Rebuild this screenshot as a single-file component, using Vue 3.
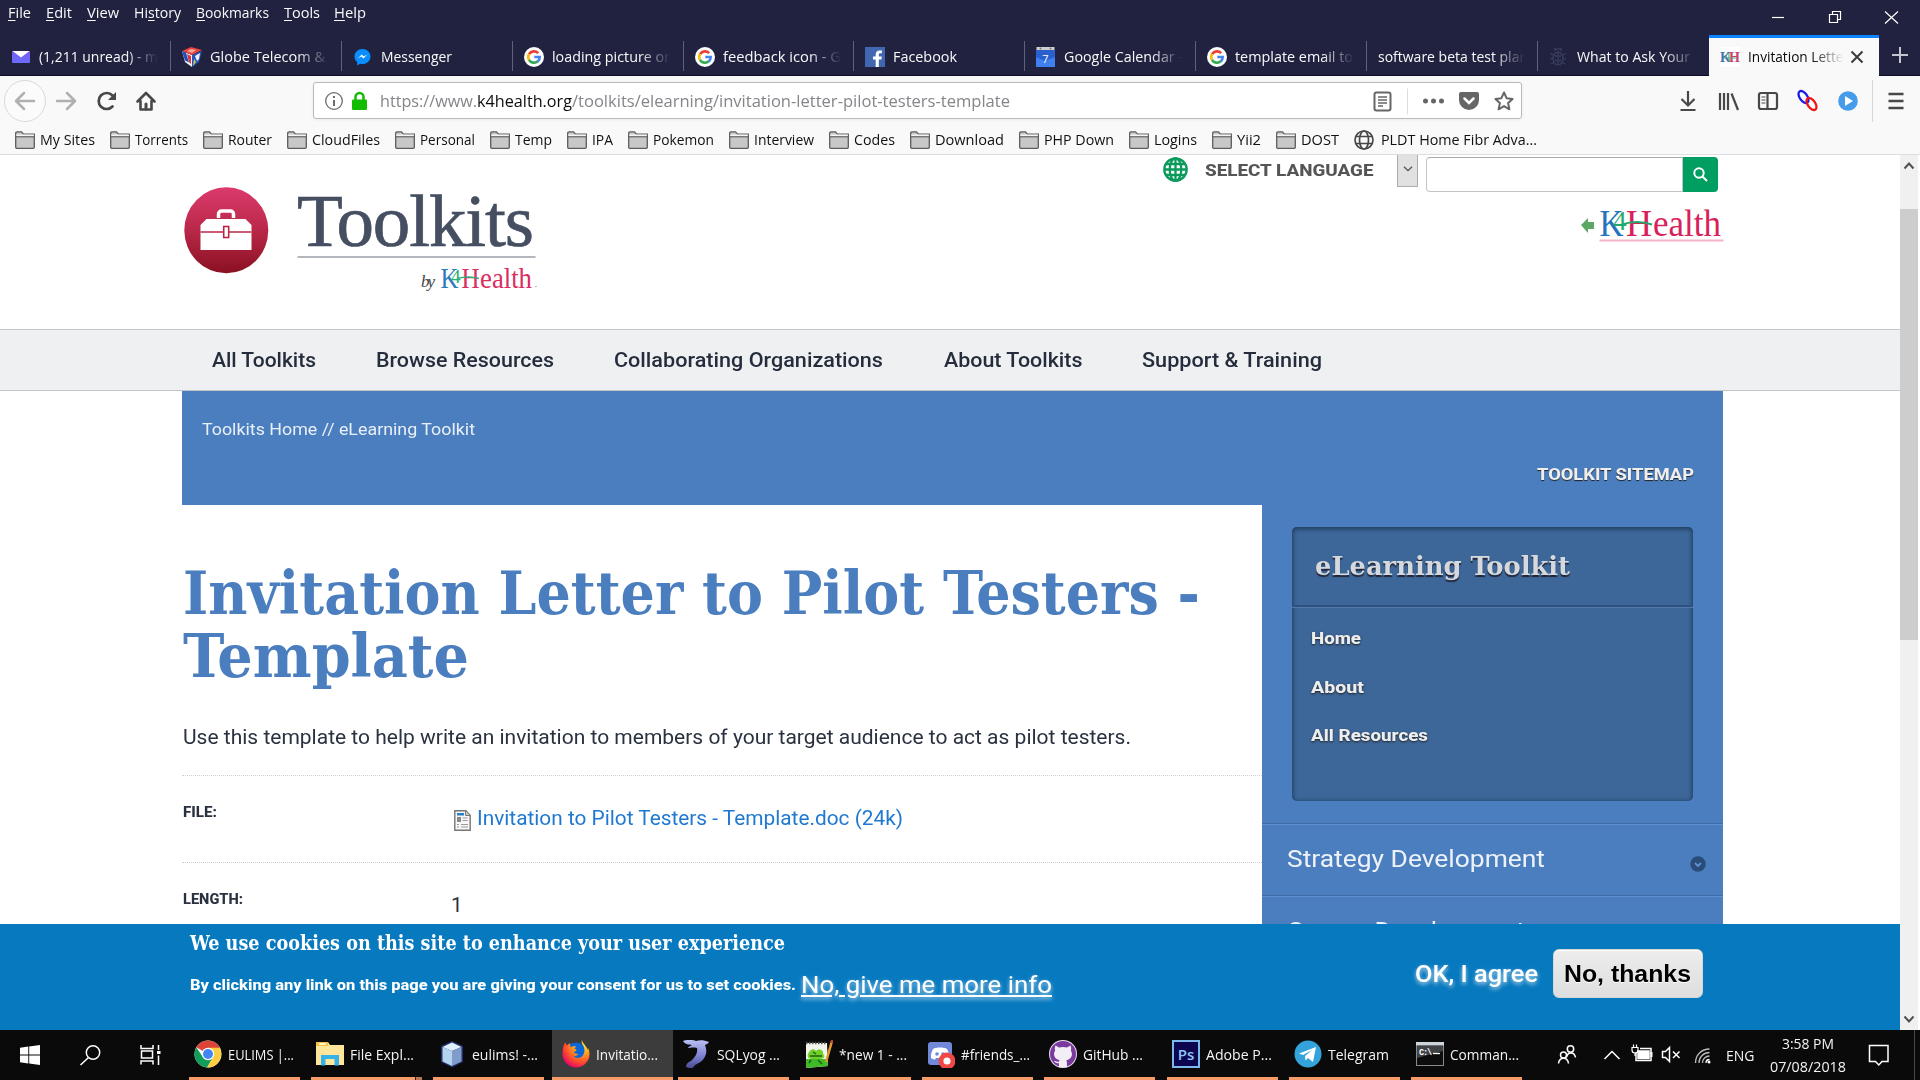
<script setup>
// Scales a label horizontally so that it takes exactly the given width.
const fit = (el, width) => {
  const glyphs = document.createElement('span')
  glyphs.className = 'glyphs'
  glyphs.append(...el.childNodes)
  el.append(glyphs)
  const natural = glyphs.getBoundingClientRect().width
  glyphs.style.transform = `scaleX(${width / natural})`
  el.style.width = `${width}px`
}
const vFit = { mounted: (el, { value }) => fit(el, value) }

const menus = [
  ['F', 'ile', '', 23, 15], ['E', 'dit', '', 26, 15], ['V', 'iew', '', 32, 15],
  ['s', 'tory', 'Hi', 47, 15], ['B', 'ookmarks', '', 73, 15], ['T', 'ools', '', 36, 14], ['H', 'elp', '', 32, 0],
]

const google = `<circle cx="10" cy="10" r="10" fill="#fff"/><g fill="none" stroke-width="2.6"><path d="M14.2 6.2A5.8 5.8 0 0 0 5 7.2" stroke="#ea4335"/><path d="M5 7.2a5.8 5.8 0 0 0 0 5.6" stroke="#fbbc05"/><path d="M5 12.8a5.8 5.8 0 0 0 8.8 1.5" stroke="#34a853"/><path d="M10.3 10h5.4c0 2-.7 3.4-1.9 4.4" stroke="#4285f4"/></g>`

const tabs = [
  { text: '(1,211 unread) - m', w: 119, icon: `<defs><linearGradient id="ym" x2="0" y2="1"><stop offset="0" stop-color="#7b5cf5"/><stop offset="1" stop-color="#6a6cf8"/></linearGradient></defs><rect x="1" y="4" width="18" height="12" rx="1" fill="url(#ym)"/><path d="M1.500 4h17L10 10.500z" fill="#fff"/>` },
  { text: 'Globe Telecom &', w: 115, icon: `<path d="M0 4 10 8v12L3 15z" fill="#f0f2fa"/><path d="M20 4 10 8v12l7-5z" fill="#2456bd"/><path d="M0 4 9 0l11 3-10 5z" fill="#e8423c"/><path d="M0 4l4 1.500 3 10-4-2z" fill="#1e50b8"/><path d="M5 7l4 2v8l-2-2z" fill="#d9343c"/><path d="M18 6l-5 3 2 5 2-2z" fill="#f3f4fa"/><path d="M12 12l2 3-3 4z" fill="#e5c54a"/><path d="M9 2l5 1-4 3-5-2z" fill="#f3a49b"/>` },
  { text: 'Messenger', w: 71, icon: `<path d="M9.500 2C5 2 1.500 5.300 1.500 9.500c0 2.300 1 4.200 2.700 5.600V18.500l3-1.700c.7.200 1.500.3 2.300.3 4.500 0 8-3.300 8-7.600S14 2 9.500 2z" fill="#0a8dff"/><path d="M4.800 11.600 8.700 7.500l2 2.100 3.600-2.100-3.900 4.100-2-2.100z" fill="#fff"/>` },
  { text: 'loading picture or', w: 118, icon: google },
  { text: 'feedback icon - G', w: 118, icon: google },
  { text: 'Facebook', w: 64, icon: `<rect width="20" height="20" fill="#4267b2"/><path d="M13.800 20v-7.500h2.600l.4-3h-3V7.700c0-.9.300-1.500 1.500-1.500h1.600V3.500c-.3 0-1.200-.1-2.300-.1-2.300 0-3.900 1.400-3.900 3.900v2.200H8v3h2.700V20z" fill="#fff"/>` },
  { text: 'Google Calendar -', w: 119, icon: `<rect y="3" width="19" height="17" fill="#3f7ff0"/><path d="M0 3h19v7L9 14 0 10z" fill="#2a5fd0"/><rect x=".5" width="18" height="3" fill="#cfcfcf"/><circle cx="4.500" cy="1.500" r="1" fill="#777"/><circle cx="14.500" cy="1.500" r="1" fill="#777"/><text x="9.500" y="15.500" text-anchor="middle" font-family="Open Sans" font-size="11" fill="#fff">7</text>` },
  { text: 'template email to', w: 118, icon: google },
  { text: 'software beta test plan', w: 150 },
  { text: 'What to Ask Your', w: 113, icon: `<g fill="none" stroke="#3c4263" stroke-width="1.200"><ellipse cx="9" cy="11.500" rx="5" ry="6.500"/><path d="M9 5v13M6 4c0-3 6-3 6 0M4 8 1.500 6.500M4 12H1M4.500 15.500 2 17M14 8l2.500-1.500M14 12h3M13.500 15.500 16 17M5 1l2 2M13 1l-2 2"/></g><g fill="#3c4263"><circle cx="7" cy="9" r="1"/><circle cx="11" cy="9" r="1"/><circle cx="7" cy="13.500" r="1"/><circle cx="11" cy="13.500" r="1"/></g>` },
]

const bookmarks = [
  ['My Sites', 55], ['Torrents', 53], ['Router', 44], ['CloudFiles', 68], ['Personal', 55], ['Temp', 37],
  ['IPA', 21], ['Pokemon', 61], ['Interview', 60], ['Codes', 41], ['Download', 69], ['PHP Down', 70],
  ['Logins', 43], ['Yii2', 24], ['DOST', 38],
]

const nav = [
  ['All Toolkits', 104], ['Browse Resources', 178], ['Collaborating Organizations', 269],
  ['About Toolkits', 138.500], ['Support & Training', 180],
]

const sideLinks = [['Home', 50], ['About', 53], ['All Resources', 117]]
const sections = [['Strategy Development', 258], ['Course Development', 238]]

const tasks = [
  { text: 'EULIMS |...', w: 66, icon: `<circle cx="14" cy="14" r="13.500" fill="#fff"/><path d="M14 14 2.300 7.200A13.500 13.500 0 0 1 25.700 7.200L26 8H14z" fill="#db4437"/><path d="M2.300 7.200A13.500 13.500 0 0 0 13 27.500L19.200 17 14 14 8.800 17z" fill="#0f9d58"/><path d="M25.700 7.800H14l5.200 9.200L13.300 27.500A13.500 13.500 0 0 0 25.700 7.800z" fill="#ffcd40"/><circle cx="14" cy="14" r="6.200" fill="#fff"/><circle cx="14" cy="14" r="5" fill="#4285f4"/>` },
  { text: 'File Expl...', w: 64, stacked: true, icon: `<path d="M0 2h12l2 3h14v20H0z" fill="#ffe69a"/><path d="M0 2h12v4H0z" fill="#f6c343"/><rect x="3" y="3" width="7" height="2" fill="#fff3c8"/><path d="M5 25.500V15h18v10.500h-4.500V19h-9v6.500z" fill="#35b3e8"/>` },
  { text: 'eulims! -...', w: 66, icon: `<path d="M14 1 25 6v16l-11 5.500L3 22V6z" fill="#23306a"/><path d="M14 2.500 23.500 7 14 11 4.500 7z" fill="#dff0fb"/><path d="M4.500 7 14 11v15L4.500 21.500z" fill="#b4d3ee"/><path d="M23.500 7 14 11v15l9.500-4.500z" fill="#7f9ccb"/>` },
  { text: 'Invitatio...', w: 62, active: true, icon: `<defs><radialGradient id="ff" cx=".75" cy=".15" r=".95"><stop offset="0" stop-color="#fff03c"/><stop offset=".35" stop-color="#ffa51e"/><stop offset=".7" stop-color="#ff4b2d"/><stop offset="1" stop-color="#e2006e"/></radialGradient></defs><circle cx="14" cy="13" r="10.500" fill="#0b66d8"/><path d="M20 0c-1 3 .5 4 1.500 6 1.500 3 1.500 7-1 10-2.500 2.700-7 2.500-9 0 2 .5 4-.5 5-2-1 .3-3-.8-4.500-1 .3-2 2.500-1.500 2.500-3-.6-1-2-1-2-1.200.2-1 1.500-1.800 1.500-2.300C12 6 10 6.500 9 7.200 8 6.500 8 4 8.300 3 6.500 3.800 5.500 5 5 5.500 4 4.500 3.500 3 3.500 2 1 5 .5 10 .5 14A13.500 13.500 0 0 0 27.500 14c0-3-.8-5-1.500-6l-.5 2C25 6 20.500 4 20 0z" fill="url(#ff)"/>` },
  { text: 'SQLyog ...', w: 63, icon: `<defs><linearGradient id="dl" x2="0" y2="1"><stop offset="0" stop-color="#b9c0f3"/><stop offset=".5" stop-color="#8488d6"/><stop offset="1" stop-color="#43488f"/></linearGradient></defs><path d="M0 1C4-.5 9-.5 13 1c4-1.500 8-1 13 1-1 2-3 2-4 3 3 7 1 15-8 19l-2 1-3 4-6-2c0-3 2-5 5-6 5-4 7-9 6-13-4-1-7 0-9 0 1-2 3-2 4-3C6 4.500 2 4.500 0 1z" fill="url(#dl)"/>` },
  { text: '*new 1 - ...', w: 68, icon: `<path d="M1 3h21l1 23-22 2z" fill="#f4f4ee"/><path d="M1 19h21.500l.5 7-22 2z" fill="#3fb927"/><path d="M1 3h21" stroke="#555" stroke-width="2.500" stroke-dasharray="1.500 1.500"/><path d="M3 14c2-5 6-6 8-3 3-3 8-1 7 3 3 2 1 5-3 5H7c-4 0-5-3-4-5z" fill="#71d028"/><path d="M5 16h12M8 12l3 2M13 20l4 4M6 20l-2 3" stroke="#1d5f14" stroke-width="1.500"/><path d="M27 1 21 22" stroke="#e39a2c" stroke-width="2.500"/><path d="M27.500 0l-.8 3" stroke="#c4453a" stroke-width="2.500"/>` },
  { text: '#friends_...', w: 69, icon: `<rect x="1" y="2" width="24" height="23" rx="3" fill="#7289da"/><path d="M6 9c3-2 11-2 14 0 2 3 2.500 7 2 9-2 1.500-4 1.500-4 1.500L17 18H9l-1 1.500S5.500 19 4 18c-.5-3 .5-6 2-9z" fill="#fff"/><circle cx="10" cy="14" r="1.800" fill="#7289da"/><circle cx="16" cy="14" r="1.800" fill="#7289da"/><circle cx="20" cy="21" r="8.500" fill="#f04747"/><circle cx="20" cy="21" r="3.600" fill="#fff"/>` },
  { text: 'GitHub ...', w: 60, icon: `<circle cx="14" cy="14" r="14" fill="#e8dcf0"/><circle cx="14" cy="14" r="13" fill="#7b3a9e"/><path d="M6.500 5.500 10 7.500c2.500-.7 5.500-.7 8 0l3.500-2c1 2 .7 4 .3 5 1 1.500 1.400 3 1 5-.7 3-3 4.200-5.600 4.700.8 1 .8 2 .8 7h-8v-4c-3 .5-4-1-5-2.500 2 0 2.500 1.500 5 1 0-.7.200-1.200.6-1.600-3-.5-4.800-2-5.400-4.600-.4-2 0-3.500 1-5-.4-1-.7-3 .3-5z" fill="#f2eef5"/>` },
  { text: 'Adobe P...', w: 66, icon: `<rect x="1" y="1" width="26" height="26" fill="#0c0550" stroke="#7ab8ee" stroke-width="2"/><text x="14" y="19.500" text-anchor="middle" font-family="Open Sans" font-weight="600" font-size="15" fill="#8fc6f5">Ps</text>` },
  { text: 'Telegram', w: 61, icon: `<circle cx="14" cy="14" r="13.500" fill="#34a3db"/><path d="M5 13.500 22 7l-3 15-5-4-2.500 2.500-.5-4.500 7-6-9 5z" fill="#fff"/>` },
  { text: 'Comman...', w: 69, icon: `<rect x=".5" y="2.500" width="27" height="23" fill="#0d0d0d" stroke="#8a8a8a"/><rect y="2" width="28" height="3.500" fill="#cfd5da"/><path d="M1 6h26v5L1 18z" fill="#3f4347"/><text x="3" y="14.500" font-family="Liberation Mono" font-weight="700" font-size="8.500" fill="#fff" textLength="13">C:\\</text><path d="M17 13.500h7" stroke="#fff" stroke-width="1.300"/>` },
]
</script>

<template>
  <div class="screen">
    <header class="titlebar">
      <nav class="menu">
        <span v-for="m in menus" :key="m[1]" v-fit="m[3]" :style="{ marginRight: m[4] + 'px' }">{{ m[2] }}<u>{{ m[0] }}</u>{{ m[1] }}</span>
      </nav>
      <svg class="winctl" width="140" height="34" viewBox="0 0 140 34" fill="none" stroke="#fff" stroke-width="1.200">
        <path d="M2 17.500h12" /><path d="M59.500 14.500h8v8h-8z M62.500 14.500v-3h8v8h-3" /><path d="M115 11.500l13 12M128 11.500l-13 12" />
      </svg>
    </header>

    <div class="tabs">
      <div v-for="(t, i) in tabs" :key="i" class="tab">
        <svg v-if="t.icon" width="20" height="20" viewBox="0 0 20 20" v-html="t.icon" />
        <div class="tabtext"><span v-fit="t.w">{{ t.text }}</span></div>
      </div>
      <div class="tab active">
        <svg width="20" height="20" viewBox="0 0 20 20">
          <rect width="20" height="20" fill="#fff" />
          <g font-family="Liberation Serif" font-weight="700" font-size="14"><text x="0" y="15" fill="#3f6fb5">K</text><text x="9" y="15" fill="#c8426b">H</text></g>
          <path d="M4 11h13M8 6l-3 5M9 6v9" stroke="#5fa883" stroke-width="1.200" fill="none" />
        </svg>
        <div class="tabtext"><span v-fit="101">Invitation Letter</span></div>
        <svg class="close" width="14" height="14" viewBox="0 0 14 14"><path d="M1.500 1.500l11 11M12.500 1.500l-11 11" stroke="#3b3b3b" stroke-width="2" /></svg>
      </div>
      <svg class="plus" width="18" height="18" viewBox="0 0 18 18"><path d="M9 1v16M1 9h16" stroke="#c4c5cf" stroke-width="2" /></svg>
    </div>

    <div class="toolbar">
      <svg class="left" width="313" height="46" viewBox="0 0 313 46" fill="none" stroke-linecap="round" stroke-linejoin="round">
        <circle cx="25" cy="25" r="20.500" stroke="#d9d9d9" fill="#fbfbfb" />
        <path d="M34 25H16.500M24 17l-8 8 8 8" stroke="#b0b0b0" stroke-width="2.500" />
        <path d="M57 25h17.500M67 17l8 8-8 8" stroke="#b0b0b0" stroke-width="2.500" />
        <path d="M112.500 30.500a8 8 0 1 1 0-11" stroke="#484848" stroke-width="2.700" /><path d="M116 16v8h-8z" fill="#484848" />
        <path d="M137.500 25.500 146 17l8.500 8.500M140.500 25v8.500h11V25" stroke="#484848" stroke-width="2.600" /><path d="M146 33v-5" stroke="#484848" stroke-width="3" />
      </svg>
      <div class="url">
        <svg width="55" height="35" viewBox="0 0 55 35">
          <circle cx="20" cy="18" r="8.300" fill="none" stroke="#6b6b6b" stroke-width="1.300" /><path d="M20 17v6M20 13v2" stroke="#6b6b6b" stroke-width="2" />
          <path d="M41.500 18v-4a4 4 0 0 1 8 0v4" fill="none" stroke="#12bc00" stroke-width="2.500" /><rect x="38" y="16.500" width="15" height="10.500" rx="1.300" fill="#12bc00" />
        </svg>
        <span v-fit="97" class="utext">https://www.</span><span v-fit="95" class="utext host">k4health.org</span><span v-fit="438" class="utext">/toolkits/elearning/invitation-letter-pilot-testers-template</span>
        <svg class="uicons" width="150" height="35" viewBox="0 0 150 35" fill="none">
          <rect x="3.500" y="9.500" width="16" height="18" rx="2" stroke="#666" stroke-width="2" /><path d="M7 14h9M7 17h9M7 20h9M7 23h5" stroke="#666" stroke-width="1.400" />
          <path d="M36.500 5.500v26" stroke="#ddd" />
          <g fill="#666"><circle cx="54.500" cy="18" r="2.500" /><circle cx="62.500" cy="18" r="2.500" /><circle cx="70.500" cy="18" r="2.500" />
            <path d="M90 9h16a2 2 0 0 1 2 2v6a10 10 0 0 1-20 0v-6a2 2 0 0 1 2-2z" /></g>
          <path d="M93.500 15.500l4.500 4.500 4.500-4.500" stroke="#fff" stroke-width="2.500" stroke-linecap="round" />
          <path d="M133 9.500l2.600 5.700 6 .7-4.500 4.200 1.300 6.200-5.400-3.200-5.400 3.200 1.300-6.200-4.500-4.200 6-.7z" stroke="#666" stroke-width="2" stroke-linejoin="round" />
        </svg>
      </div>
      <svg class="right" width="260" height="46" viewBox="0 0 260 46" fill="none" stroke="#484848" stroke-width="2.200">
        <path d="M28 15v14M21.500 23l6.500 6.500L34.500 23M20.500 34h15" />
        <path d="M60 17v17M64 17v17M68 17v17M71.500 17.500l6.500 16.500" />
        <rect x="99" y="17" width="18" height="16" rx="2" /><path d="M107.500 17v16" /><path d="M101.500 21h4M101.500 24h4M101.500 27h4" stroke-width="1.200" />
        <g stroke-width="2.300"><ellipse cx="143.500" cy="21" rx="3.800" ry="6.800" transform="rotate(-35 143.500 21)" stroke="#1a1ae8" /><ellipse cx="151.500" cy="28" rx="3.800" ry="6.800" transform="rotate(-35 151.500 28)" stroke="#ef1515" /></g>
        <circle cx="188" cy="25" r="9.800" fill="#469cea" stroke="none" /><path d="M185 20l8 5-8 5z" fill="#fff" stroke="none" />
        <path d="M212.500 4v42" stroke="#d5d5d5" stroke-width="1" />
        <path d="M228.500 18h15M228.500 25h15M228.500 32h15" stroke-width="2.600" />
      </svg>
    </div>

    <div class="bookmarks">
      <div v-for="b in bookmarks" :key="b[0]" class="bm">
        <svg width="20" height="18" viewBox="0 0 20 18"><path d="M.7 16.300V2.200c0-.8.5-1.300 1.300-1.300h4.500l2 2.300h10.800v13.100c0 .6-.4 1-1 1H1.700c-.6 0-1-.4-1-1z" fill="#c8c8c8" stroke="#5c5c5c" stroke-width="1.300" /><path d="M1.300 3.500h17.500v1.700H1.300z" fill="#f4f4f4" /><path d="M.7 5.800h18.600" stroke="#5c5c5c" stroke-width="1.100" /></svg>
        <span v-fit="b[1]">{{ b[0] }}</span>
      </div>
      <div class="bm">
        <svg width="20" height="20" viewBox="0 0 20 20" fill="none" stroke="#484848" stroke-width="1.700"><circle cx="10" cy="10" r="9" /><ellipse cx="10" cy="10" rx="4.500" ry="9" /><path d="M2 6.500h16M2 13.500h16" /></svg>
        <span v-fit="156" class="pldt">PLDT Home Fibr Adva...</span>
      </div>
    </div>

    <div class="view">
      <main class="page">
        <div class="head">
          <svg class="brand" width="370" height="174" viewBox="0 0 370 174">
            <defs>
              <linearGradient id="disc" x2="0" y2="1"><stop offset="0" stop-color="#dc3a6c" /><stop offset=".5" stop-color="#b92848" /><stop offset="1" stop-color="#8a1022" /></linearGradient>
            </defs>
            <ellipse cx="46.300" cy="75.300" rx="42" ry="43" fill="url(#disc)" />
            <path d="M38.500 63v-4a3 3 0 0 1 3-3h9a3 3 0 0 1 3 3v4" fill="none" stroke="#fff" stroke-width="3.500" />
            <path d="M20.500 70l6-6h39l6 6v25h-51z" fill="#fff" />
            <path d="M20.500 77h51" stroke="#b92848" stroke-width="1.500" /><rect x="43.700" y="71.500" width="5" height="11" fill="#fff" stroke="#b92848" stroke-width="1.600" />
            <text x="117" y="91" font-family="Liberation Serif, serif" font-size="75" fill="#454f61" stroke="#454f61" stroke-width=".7" textLength="237" lengthAdjust="spacing">Toolkits</text>
            <path d="M117.500 102h238" stroke="#b3b6bd" stroke-width="2" />
            <text x="241" y="132" font-family="Liberation Serif, serif" font-style="italic" font-size="17" fill="#444" textLength="14">by</text>
            <g font-family="Liberation Serif, serif">
              <text x="260.500" y="132.500" font-size="29" fill="#2b7cc0" textLength="18" lengthAdjust="spacingAndGlyphs">K</text>
              <text x="281.500" y="132.500" font-size="29" fill="#da2d62" textLength="18" lengthAdjust="spacingAndGlyphs">H</text>
              <text x="300" y="132.500" font-size="29" fill="#da2d62" textLength="52" lengthAdjust="spacingAndGlyphs">ealth</text>
              <text x="271" y="127.500" font-size="19" fill="#2eae74">4</text>
            </g>
            <path d="M277 123.500q12-3 22 0" fill="none" stroke="#2eae74" stroke-width="1.500" />
            <path d="M355 131.500h2" stroke="#bbb" />
          </svg>
          <div class="tools">
            <div class="toolrow">
              <svg class="globe" width="25" height="25" viewBox="0 0 25 25" fill="none" stroke="#0a9b5c" stroke-width="2.300"><circle cx="12.500" cy="12.500" r="11.200" /><ellipse cx="12.500" cy="12.500" rx="5.800" ry="11.200" /><path d="M12.500 1v23M1.500 12.500h22M3 7h19M3 18h19" /></svg>
              <span v-fit="168.5" class="lang">SELECT LANGUAGE</span>
              <div class="drop"><svg width="10" height="6" viewBox="0 0 10 6"><path d="M1 .7l4 4 4-4" fill="none" stroke="#555" stroke-width="1.300" /></svg></div>
              <div class="search" />
              <div class="go"><svg width="15" height="15" viewBox="0 0 15 15" fill="none" stroke="#fff" stroke-width="2"><circle cx="6" cy="6" r="4.700" /><path d="M9.500 9.500l4.500 4.500" /></svg></div>
            </div>
            <svg class="k4" width="146" height="44" viewBox="0 0 146 44">
              <path d="M3 20l7-7v4h6v7h-6v4z" fill="#5aa863" />
              <g font-family="Liberation Serif, serif">
                <text x="21.500" y="31" font-size="38" fill="#2474bc" textLength="24" lengthAdjust="spacingAndGlyphs">K</text>
                <text x="48" y="31" font-size="38" fill="#d8215a" textLength="26" lengthAdjust="spacingAndGlyphs">H</text>
                <text x="75" y="31" font-size="38" fill="#d8215a" textLength="68" lengthAdjust="spacingAndGlyphs">ealth</text>
                <text x="35" y="25" font-size="27" fill="#22a86a">4</text>
              </g>
              <path d="M44 19.500q15-5 30 0" fill="none" stroke="#22a86a" stroke-width="2" />
              <path d="M21.500 35.500h124" stroke="#f5b4c5" stroke-width="2" />
            </svg>
          </div>
        </div>

        <nav class="nav"><span v-for="n in nav" :key="n[0]" v-fit="n[1]">{{ n[0] }}</span></nav>

        <div class="wrap">
          <div class="banner">
            <span v-fit="273" class="crumb">Toolkits Home // eLearning Toolkit</span>
            <span v-fit="157" class="sitemap">TOOLKIT SITEMAP</span>
          </div>
          <div class="cols">
            <article class="main">
              <h1><span v-fit="1017">Invitation Letter to Pilot Testers -</span><span v-fit="286">Template</span></h1>
              <p class="intro"><span v-fit="948">Use this template to help write an invitation to members of your target audience to act as pilot testers.</span></p>
              <div class="field">
                <div class="label"><span v-fit="34">FILE:</span></div>
                <div class="value">
                  <svg width="17" height="21" viewBox="0 0 17 21"><path d="M.8.800h11l4.400 4.400v15H.8z" fill="#f7f7f7" stroke="#777" stroke-width="1.400" /><path d="M11.500 1v4.500H16" fill="#ccc" stroke="#777" /><rect x="3" y="3" width="7" height="2.500" fill="#2b7fc3" /><rect x="3" y="7" width="4" height="5" fill="#888" /><path d="M8.500 8h5M8.500 10.500h5M3 14.500h2M7 14.500h7M3 17h2M7 17h7" stroke="#999" stroke-width="1.100" /></svg>
                  <a v-fit="426">Invitation to Pilot Testers - Template.doc (24k)</a>
                </div>
              </div>
              <div class="field">
                <div class="label"><span v-fit="60">LENGTH:</span></div>
                <div class="value one">1</div>
              </div>
            </article>
            <aside class="side">
              <div class="box">
                <h2><span v-fit="255">eLearning Toolkit</span></h2>
                <div class="links"><span v-for="l in sideLinks" :key="l[0]" v-fit="l[1]">{{ l[0] }}</span></div>
              </div>
              <div v-for="(s, i) in sections" :key="s[0]" class="section">
                <span v-fit="s[1]">{{ s[0] }}</span>
                <svg v-if="i === 0" width="16" height="16" viewBox="0 0 16 16"><circle cx="8" cy="8" r="7.700" fill="#294c79" /><path d="M5 7l3 3 3-3" fill="none" stroke="#5f92cf" stroke-width="1.800" /></svg>
              </div>
            </aside>
          </div>
        </div>

        <div class="cookie">
          <div class="msg">
            <h3><span v-fit="595">We use cookies on this site to enhance your user experience</span></h3>
            <p><b v-fit="606">By clicking any link on this page you are giving your consent for us to set cookies.</b><a v-fit="251">No, give me more info</a></p>
          </div>
          <div class="acts"><span v-fit="123" class="ok">OK, I agree</span><button><span v-fit="127">No, thanks</span></button></div>
        </div>
      </main>
      <div class="scroll">
        <svg width="18" height="20" viewBox="0 0 18 20"><path d="M4.500 13.500 9 8.500l4.500 5" fill="none" stroke="#505050" stroke-width="2" /></svg>
        <div class="thumb" />
        <svg width="18" height="22" viewBox="0 0 18 22"><path d="M4.500 8.500l4.500 5 4.500-5" fill="none" stroke="#505050" stroke-width="2" /></svg>
      </div>
    </div>

    <footer class="taskbar">
      <svg width="189" height="50" viewBox="0 0 189 50" fill="none" stroke="#fff" stroke-width="1.500">
        <path d="M20 17.800l8.300-1.200v8H20zM29.200 16.500 40 15v9.600H29.200zM20 25.500h8.300v8L20 32.300zM29.200 25.500H40V35l-10.800-1.500z" fill="#fff" stroke="none" />
        <circle cx="93" cy="22.500" r="6.700" /><path d="M88.500 27.500 80.500 35" />
        <path d="M141 15v3.500h12V15M141 34.500V31h12v3.500M141.500 21h11v7h-11zM158.500 15v5M158.500 25.500V35" /><path d="M157 21h3.500v3H157z" fill="#fff" stroke="none" />
      </svg>
      <div class="tasks">
        <div v-for="t in tasks" :key="t.text" class="task" :class="{ on: t.active, stacked: t.stacked }">
          <svg width="28" height="28" viewBox="0 0 28 28" v-html="t.icon" />
          <span v-fit="t.w">{{ t.text }}</span>
        </div>
      </div>
      <svg class="tray" width="170" height="50" viewBox="0 0 170 50" fill="none" stroke="#fff" stroke-width="1.500">
        <circle cx="20.500" cy="19" r="3.200" /><path d="M16.500 27.500c1-6 8-6 9 0" /><circle cx="13.500" cy="25" r="3" /><path d="M8.500 33.500c1-7 9-7 10 0" />
        <path d="M54.500 29l7.500-7.500 7.500 7.500" />
        <path d="M90 18.500h11v12H86v-8" /><path d="M88 21h11v7.500H88z" fill="#fff" /><path d="M82 17.500h6v2.500a3 3 0 0 1-6 0zM83.500 14.500v3M86.500 14.500v3M85 23v3" stroke-width="1.200" /><path d="M101.500 22v5" stroke-width="2" />
        <path d="M112.500 21.500h3l4-4v14l-4-4h-3zM123 21.500l6.500 6.500M129.500 21.500 123 28" />
        <g stroke="#bbb" stroke-width="1.300"><path d="M145.500 33c0-8 6-14 14-14M149 33c0-6 4.500-10.500 10.500-10.500M152.500 33c0-4 3-7 7-7" /><path d="M156 33c0-2 1.500-3.500 3.500-3.500" stroke="#fff" /></g><circle cx="159" cy="32" r="1.500" fill="#fff" stroke="none" />
      </svg>
      <span v-fit="28.5" class="eng">ENG</span>
      <div class="clock"><span v-fit="52">3:58 PM</span><span v-fit="76">07/08/2018</span></div>
      <svg class="note" width="22" height="24" viewBox="0 0 22 24" fill="none" stroke="#fff" stroke-width="1.500"><path d="M1.500 1.500h18.500v16h-6l-3.200 3.500-3.300-3.500h-6z" /></svg>
      <div class="peek" />
    </footer>
  </div>
</template>

<style>
body { margin: 0; overflow: hidden; }
</style>

<style scoped>
.screen { width: 1920px; height: 1080px; overflow: hidden; display: flex; flex-direction: column; background: #fff; font-family: "Open Sans", "Noto Sans", sans-serif; font-size: 14.500px; color: #0c0c0d; }
.screen span, .screen a, .screen b { display: inline-block; white-space: nowrap; flex: none; }
.screen :deep(.glyphs) { display: inline-block; white-space: nowrap; transform-origin: 0 50%; }
svg { display: block; flex: none; }
h1, h2, h3, p { margin: 0; }

.titlebar { height: 34px; flex: none; display: flex; justify-content: space-between; background: #20223f; color: #f9f9fa; }
.menu { display: flex; padding-left: 8px; line-height: 26px; }
.menu u { text-decoration: underline; text-underline-offset: 2px; }
.winctl { margin-right: 10px; }

.tabs { height: 42px; flex: none; display: flex; background: #20223f; color: #f9f9fa; box-shadow: inset 0 -1px #0d0b26; }
.tab { width: 170.900px; flex: none; box-sizing: border-box; display: flex; align-items: center; padding: 3px 13px 0 11px; position: relative; }
.tab:not(.active):not(:nth-child(10))::after { content: ""; position: absolute; right: 0; top: 7px; height: 30px; border-right: 1px solid #60627a; }
.tabtext { flex: 1; min-width: 0; overflow: hidden; line-height: 24px; white-space: nowrap; -webkit-mask-image: linear-gradient(to left, transparent 0, #000 32px); mask-image: linear-gradient(to left, transparent 0, #000 32px); }
.tab svg + .tabtext { margin-left: 8px; }
.active { background: #f9f9fa; color: #0c0c0d; box-shadow: inset 0 3px #0a84ff; margin-top: 1px; padding: 2px 15px 0 11px; width: 170px; }
.tab .close { margin-left: 6px; }
.plus { margin: 12px 0 0 12px; }

.toolbar { height: 46px; flex: none; display: flex; background: #f9f9fa; }
.url { box-sizing: border-box; width: 1209px; height: 37px; margin-top: 6px; border: 1px solid #b9b9ba; border-radius: 3px; background: #fff; display: flex; align-items: center; box-shadow: 0 1px 4px rgba(0,0,0,.06); }
.url > svg:first-child { margin-right: 11px; }
.utext { font-size: 16px; line-height: 34px; margin-top: 1px; color: #85858a; }
.host { color: #0c0c0d; }
.uicons { margin-left: 360.500px; margin-right: -4px; }
.right { margin-left: 138px; }

.bookmarks { height: 32px; flex: none; box-sizing: content-box; display: flex; gap: 15px; padding-left: 15px; background: #f9f9fa; border-bottom: 1px solid #dedede; }
.bm { display: flex; align-items: center; gap: 5px; height: 35px; color: #111; }
.pldt { margin-left: 2px; }

.view { height: 875px; flex: none; display: flex; }
.page { width: 1900px; height: 875px; overflow: hidden; position: relative; font-family: Roboto, "Open Sans", sans-serif; color: #2a3140; }
.head { height: 174px; display: flex; padding-left: 180px; }
.tools { margin-left: 613px; display: flex; flex-direction: column; width: 561px; }
.toolrow { display: flex; height: 50px; }
.globe { margin-top: 2px; }
.lang { margin: 3px 23.500px 0 17px; font-weight: 800; font-size: 17px; line-height: 24px; color: #555; }
.drop { box-sizing: border-box; width: 21px; height: 32px; background: #e1e1e1; border: 1px solid #adadad; border-top: 0; display: flex; align-items: center; justify-content: center; padding-bottom: 3px; }
.search { box-sizing: border-box; margin: 2px 0 0 8px; width: 257px; height: 35px; border: 1px solid #c4c4c4; border-top-color: #aaa; border-radius: 4px 0 0 4px; }
.go { margin-top: 2px; width: 35px; height: 35px; border-radius: 0 4px 4px 0; background: #009e60; display: flex; align-items: center; justify-content: center; }
.k4 { align-self: flex-end; }

.nav { height: 60px; border-top: 1px solid #c2c5ca; border-bottom: 1px solid #c2c5ca; background: #eff0f2; display: flex; gap: 60.200px; padding-left: 212px; font-weight: 500; font-size: 20px; line-height: 60px; color: #252d3c; }

.wrap { margin-left: 182px; width: 1541px; background: #4b7ebf; }
.banner { height: 114px; display: flex; flex-direction: column; align-items: flex-start; }
.crumb { margin: 26px 0 0 20px; font-size: 17px; line-height: 24px; color: #e9eff7; }
.banner .sitemap { align-self: flex-end; margin: 22px 29px 0 0; font-weight: 800; font-size: 16.500px; line-height: 24px; color: #eee; text-shadow: 0 1px 1px #222; }
.cols { display: flex; height: 500px; }
.main { width: 1080px; background: #fff; }
h1 { display: flex; flex-direction: column; align-items: flex-start; padding: 57px 0 0 1px; font-family: "DejaVu Serif Condensed", "DejaVu Serif", serif; font-stretch: condensed; font-weight: 700; font-size: 59px; line-height: 63px; color: #4b7ebf; }
.intro { padding: 35px 0 24px 1px; font-size: 20.500px; line-height: 28px; height: 28px; }
.field { display: flex; height: 86px; border-top: 1px dotted #d0d0d0; }
.label { width: 271px; padding: 24px 0 0 1px; box-sizing: border-box; font-weight: 800; font-size: 15.500px; line-height: 24px; }
.value { display: flex; padding-top: 28px; font-size: 20.500px; line-height: 28px; }
.one { margin-left: -2px; }
.value svg { margin: 6px 6px 0 1px; }
.value a { color: #1f78d1; }

.side { flex: 1; color: #eee; }
.box { margin: 22px 30px 22px 30px; height: 274px; border-radius: 5px; background: #3d6799; box-shadow: inset 0 1px 4px 1px #1f3a5c; }
h2 { height: 78px; border-bottom: 2px solid #2d5180; box-shadow: 0 1px #5479a6; padding-left: 23px; font-family: "DejaVu Serif Condensed", "DejaVu Serif", serif; font-stretch: condensed; font-weight: 700; font-size: 26.500px; line-height: 77px; color: #d5d8dc; text-shadow: 0 2px 1px #223; }
.links { display: flex; flex-direction: column; align-items: flex-start; gap: 24.500px; padding: 20px 0 0 19px; font-weight: 800; font-size: 16.500px; line-height: 24px; text-shadow: 0 1px 2px #222; }
.section { height: 71px; border-top: 1px solid #3f6ba6; box-shadow: inset 0 1px #6190cc; display: flex; justify-content: space-between; padding: 0 17px 0 25px; font-size: 24px; line-height: 70px; color: #edf2f9; }
.section svg { margin-top: 32px; }

.cookie { position: absolute; left: 0; top: 769px; width: 1900px; height: 106px; background: #0779bf; color: #fff; display: flex; }
.msg { padding-left: 190px; width: 1415px; box-sizing: border-box; flex: none; }
h3 { height: 38px; font-family: "DejaVu Serif Condensed", "DejaVu Serif", serif; font-stretch: condensed; font-weight: 700; font-size: 21px; line-height: 38px; }
.msg p { display: flex; align-items: flex-start; gap: 5px; height: 46px; line-height: 46px; }
.msg b { font-weight: 800; font-size: 15.500px; }
.msg a, .ok { font-size: 24px; text-shadow: 0 2px 4px rgba(255,255,255,.75); }
.msg a :deep(.glyphs) { text-decoration: underline; text-decoration-thickness: 2px; text-underline-offset: 2px; }
.acts { display: flex; align-items: flex-start; padding-top: 25px; gap: 15px; }
.ok { line-height: 50px; font-weight: 500; }
button { box-sizing: border-box; width: 150px; height: 49px; border: 1px solid #d6d6d6; border-radius: 6px; background: linear-gradient(#ededed, #dedede); box-shadow: inset 0 1px #fff; padding: 0; font: 700 24px/46px "Liberation Sans", sans-serif; color: #000; text-shadow: 0 1px #fff; text-align: left; padding-left: 10px; }

.scroll { width: 18px; background: #f0f0f0; display: flex; flex-direction: column; margin-right: 2px; }
.thumb { height: 431px; margin: 34px 0 368px; background: #cdcdcd; flex: none; }

.taskbar { height: 50px; flex: none; display: flex; background: #0a0a0a; color: #f4f4f4; }
.tasks { display: flex; gap: 11.200px; width: 1345px; flex: none; }
.task { width: 111px; flex: none; height: 50px; box-sizing: border-box; border-bottom: 3px solid #f79c68; display: flex; align-items: center; padding: 0 0 0 5px; gap: 6px; }
.task span { line-height: 24px; margin-top: 3px; }
.task.on { background: #3c3c3c; width: 121px; margin: 0 -6px 0 -4px; padding-left: 10px; }
.stacked { border-image: linear-gradient(to right, #f79c68 101px, #222 101px, #222 102px, #b9784f 102px) 3; border-style: solid; border-width: 0 0 3px; }
.tray { margin-left: 16px; }
.eng { margin-left: 5.500px; line-height: 51px; }
.clock { width: 76px; margin-left: 16px; display: flex; flex-direction: column; align-items: center; font-size: 14px; line-height: 23px; padding-top: 2px; }
.note { margin: 14px 0 0 22px; }
.peek { margin-left: 24px; border-left: 1px solid #4a4a4a; }
</style>
